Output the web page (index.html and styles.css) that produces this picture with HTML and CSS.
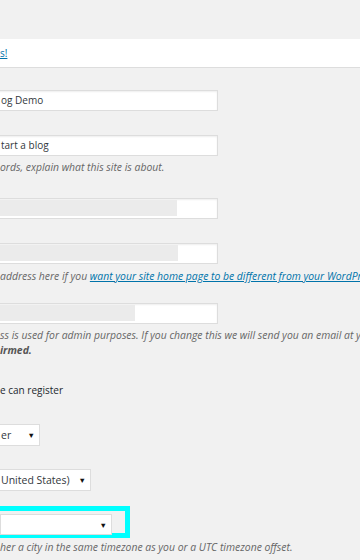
FILE: index.html
```html
<!DOCTYPE html>
<html lang="en">
<head>
  <meta charset="UTF-8" />
  <meta name="viewport" content="width=device-width, initial-scale=1.0" />
  <title>General Settings</title>
  <link rel="stylesheet" href="styles.css">
</head>
<body>
  <div class="notice">
    <a href="#">s!</a>
  </div>

  <div class="settings">
    <div class="input row-title">og Demo</div>
    <div class="input row-tagline">tart a blog</div>
    <p class="description desc-tagline">ords, explain what this site is about.</p>

    <div class="input row-siteurl"><span class="redact redact-wide"></span></div>
    <div class="input row-home"><span class="redact redact-wider"></span></div>
    <p class="description desc-home">address here if you <a href="#">want your site home page to be different from your WordPre</a></p>

    <div class="input row-email"><span class="redact redact-short"></span></div>
    <p class="description desc-email">ss is used for admin purposes. If you change this we will send you an email at yo<br><strong>irmed.</strong></p>

    <label class="check">e can register</label>

    <div class="select select-role">er<span class="arrow">&#9660;</span></div>
    <div class="select select-lang">United States)<span class="arrow">&#9660;</span></div>

    <div class="highlight">
      <div class="select select-tz"><span class="arrow">&#9660;</span></div>
    </div>
    <p class="description desc-tz">her a city in the same timezone as you or a UTC timezone offset.</p>
  </div>
</body>
</html>
```

FILE: styles.css
```css
body {
  margin: 0;
  padding: 0;
  background: #f1f1f1;
  color: #444;
  font-family: 'Open Sans', 'Noto Sans', sans-serif;
  font-size: 10px;
  overflow: hidden;
}
a {
  color: #0073aa;
}
.notice {
  margin-top: 39px;
  height: 28px;
  line-height: 28px;
  background: #fff;
  border-bottom: 1px solid #ddd;
}
.settings {
  display: flex;
  flex-direction: column;
  align-items: flex-start;
}
.input {
  box-sizing: border-box;
  width: 222px;
  height: 21px;
  margin-left: -4px;
  padding: 0 4px;
  line-height: 19px;
  background: #fff;
  border: 1px solid #ddd;
  box-shadow: inset 0 1px 2px rgba(0, 0, 0, 0.07);
  color: #32373c;
  font-size: 10px;
  white-space: nowrap;
}
.row-title { margin-top: 22px; }
.row-tagline { margin-top: 24px; }
.row-siteurl { margin-top: 23px; }
.row-home { margin-top: 24px; }
.row-email { margin-top: 19px; }
.redact {
  display: block;
  height: 16px;
  margin: 1px 0 0 -4px;
  background: #ebebeb;
}
.redact-wide { width: 180px; }
.redact-wider { width: 181px; }
.redact-short { width: 138px; }
.description {
  margin: 0;
  max-width: 360px;
  overflow: hidden;
  color: #666;
  font-style: italic;
  font-size: 10.4px;
  line-height: 15px;
  white-space: nowrap;
}
.desc-tagline { margin-top: 4px; }
.desc-home { margin-top: 5px; }
.desc-email { margin-top: 4px; }
.desc-email strong {
  color: #555;
}
.desc-tz { margin-top: 2px; }
.check {
  margin-top: 25px;
  line-height: 15px;
  color: #23282d;
  font-size: 10px;
}
.select {
  box-sizing: border-box;
  position: relative;
  height: 22px;
  margin-left: -4px;
  padding: 0 4px;
  line-height: 20px;
  background: #fff;
  border: 1px solid #ddd;
  color: #32373c;
  font-size: 10.5px;
}
.arrow {
  position: absolute;
  top: 0;
  right: 4px;
  font-size: 7.5px;
  color: #111;
}
.select-role {
  width: 44px;
  margin-top: 26px;
}
.select-lang {
  width: 95px;
  margin-top: 23px;
}
.highlight {
  box-sizing: border-box;
  width: 135px;
  height: 32px;
  margin: 15px 0 0 -5px;
  border: 5px solid #00ffff;
  display: flex;
  align-items: flex-start;
}
.select-tz {
  width: 112px;
  height: 21px;
  margin-left: 0;
  margin-top: 3px;
}
```
